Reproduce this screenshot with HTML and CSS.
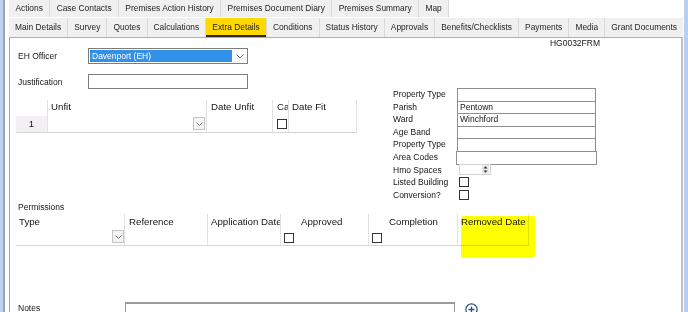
FILE: index.html
```html
<!DOCTYPE html>
<html lang="en">
<head>
    <meta charset="UTF-8">
    <title>Premises - Extra Details</title>
    <link rel="stylesheet" href="styles.css">
</head>
<body>
<div class="frame">
  <div class="edge-l"></div>
  <div class="win">
    <div class="tabs tabs-top">
      <div class="tab">Actions</div>
      <div class="tab">Case Contacts</div>
      <div class="tab">Premises Action History</div>
      <div class="tab">Premises Document Diary</div>
      <div class="tab">Premises Summary</div>
      <div class="tab">Map</div>
    </div>
    <div class="tabs tabs-main">
      <div class="tab">Main Details</div>
      <div class="tab">Survey</div>
      <div class="tab">Quotes</div>
      <div class="tab">Calculations</div>
      <div class="tab active">Extra Details</div>
      <div class="tab">Conditions</div>
      <div class="tab">Status History</div>
      <div class="tab">Approvals</div>
      <div class="tab">Benefits/Checklists</div>
      <div class="tab">Payments</div>
      <div class="tab">Media</div>
      <div class="tab last">Grant Documents</div>
    </div>

    <div class="panel">
      <div class="formcode">HG0032FRM</div>

      <div class="field eh">
        <div class="field-label">EH Officer</div>
        <div class="combo">
          <div class="combo-sel">Davenport (EH)</div>
          <svg class="chev" width="8" height="5" viewBox="0 0 8 5"><path d="M0.5 0.5 L4 4 L7.5 0.5" fill="none" stroke="#666" stroke-width="1"/></svg>
        </div>
      </div>

      <div class="field just">
        <div class="field-label">Justification</div>
        <div class="textbox"></div>
      </div>

      <div class="mid">
        <div class="grid grid-unfit">
          <div class="grow ghead">
            <div class="gcell c-rh"></div>
            <div class="gcell c-unfit">Unfit</div>
            <div class="gcell c-dunfit">Date Unfit</div>
            <div class="gcell c-ca">Ca</div>
            <div class="gcell c-dfit">Date Fit</div>
          </div>
          <div class="grow gbody">
            <div class="gcell c-rh rowhead">1</div>
            <div class="gcell c-unfit has-btn"><div class="ddbtn"><svg width="7" height="4" viewBox="0 0 7 4"><path d="M0.5 0.5 L3.5 3.5 L6.5 0.5" fill="none" stroke="#777" stroke-width="1"/></svg></div></div>
            <div class="gcell c-dunfit"></div>
            <div class="gcell c-ca chk-cell"><div class="chk"></div></div>
            <div class="gcell c-dfit"></div>
          </div>
        </div>

        <div class="props">
          <div class="plabel">Property Type</div><div class="pbox"></div>
          <div class="plabel">Parish</div><div class="pbox">Pentown</div>
          <div class="plabel">Ward</div><div class="pbox">Winchford</div>
          <div class="plabel">Age Band</div><div class="pbox"></div>
          <div class="plabel">Property Type</div><div class="pbox"></div>
          <div class="plabel">Area Codes</div><div class="pbox wide"></div>
          <div class="plabel">Hmo Spaces</div>
          <div class="pcell"><div class="spin"><svg class="spin-arrows" width="7" height="9" viewBox="0 0 7 9"><rect x="0" y="0" width="7" height="9" fill="#e8e8e8"/><path d="M1.5 3.5 L3.5 1.2 L5.5 3.5 Z M1.5 5.5 L3.5 7.8 L5.5 5.5 Z" fill="#333"/></svg></div></div>
          <div class="plabel">Listed Building</div><div class="pcell"><div class="chk"></div></div>
          <div class="plabel">Conversion?</div><div class="pcell"><div class="chk"></div></div>
        </div>
      </div>

      <div class="perm-label">Permissions</div>
      <div class="grid grid-perm">
        <div class="grow ghead">
          <div class="gcell p-type">Type</div>
          <div class="gcell p-ref">Reference</div>
          <div class="gcell p-appdate">Application Date</div>
          <div class="gcell p-chk"></div>
          <div class="gcell p-appr">Approved</div>
          <div class="gcell p-chk"></div>
          <div class="gcell p-comp">Completion</div>
          <div class="gcell p-rem">Removed Date</div>
        </div>
        <div class="grow gbody">
          <div class="gcell p-type has-btn flush"><div class="ddbtn"><svg width="7" height="4" viewBox="0 0 7 4"><path d="M0.5 0.5 L3.5 3.5 L6.5 0.5" fill="none" stroke="#777" stroke-width="1"/></svg></div></div>
          <div class="gcell p-ref"></div>
          <div class="gcell p-appdate"></div>
          <div class="gcell p-chk chk-cell"><div class="chk"></div></div>
          <div class="gcell p-appr"></div>
          <div class="gcell p-chk chk-cell"><div class="chk"></div></div>
          <div class="gcell p-comp"></div>
          <div class="gcell p-rem"></div>
        </div>
        <div class="marker"></div>
      </div>

      <div class="notes">
        <div class="notes-label">Notes</div>
        <div class="notes-box"></div>
        <svg class="add-icon" width="13" height="13" viewBox="0 0 13 13"><circle cx="6.5" cy="6.5" r="5.6" fill="#fff" stroke="#2f4f7f" stroke-width="1.2"/><path d="M6.5 3.5 V9.5 M3.5 6.5 H9.5" stroke="#2f4f7f" stroke-width="1.3"/></svg>
      </div>
    </div>
  </div>
  <div class="edge-r"></div>
</div>
</body>
</html>
```

FILE: styles.css
```css
body {
  margin: 0;
  font-family: "Liberation Sans", Arial, sans-serif;
  font-size: 8.5px;
  color: #151515;
  background: #fff;
}

.frame {
  display: flex;
  height: 312px;
  overflow: hidden;
}

.edge-l {
  width: 3px;
  background: #bdd3f0;
  border-right: 2px solid #a2a2a2;
}

.edge-r {
  width: 4px;
  background: #b8cfef;
  border-left: 1px solid #fff;
}

.win {
  flex: 1;
  min-width: 0;
  padding-left: 4px;
  display: flex;
  flex-direction: column;
}

/* tab strip */
.tabs {
  display: flex;
}

.tab {
  background: #f0f0f0;
  border-right: 1px solid #dadada;
  white-space: nowrap;
  font-size: 8.4px;
  color: #1e1e1e;
}

.tabs-top {
  height: 17px;
}

.tabs-top .tab {
  padding: 0 6.4px;
  line-height: 17px;
}

.tabs-main {
  margin-top: 1px;
  height: 19px;
}

.tabs-main .tab {
  flex: 1 1 auto;
  padding: 0 6px;
  line-height: 19px;
  text-align: center;
}

.tab.last {
  border-right: none;
}

.tab.active {
  background: #ffd800;
  box-shadow: inset 0 -2px #2a2a2a;
}

/* panel */
.panel {
  flex: 1;
  border-top: 1px solid #adadad;
  border-left: 1px solid #a3a3a3;
  border-right: 2px solid #c2c2c2;
  padding-left: 8px;
}

.formcode {
  height: 10px;
  line-height: 10px;
  text-align: right;
  padding-right: 81px;
}

.field {
  display: flex;
  align-items: center;
}

.field-label {
  width: 70px;
}

.eh {
  height: 16px;
}

.combo {
  width: 160px;
  height: 16px;
  box-sizing: border-box;
  border: 1px solid #7d7d7d;
  padding: 1px;
  display: flex;
  align-items: center;
}

.combo-sel {
  width: 142px;
  height: 12px;
  line-height: 12px;
  background: #3390e8;
  color: #fff;
  padding-left: 2px;
  box-sizing: border-box;
}

.chev {
  margin-left: 4px;
}

.just {
  margin-top: 10px;
  height: 15px;
}

.textbox {
  width: 160px;
  height: 15px;
  box-sizing: border-box;
  border: 1px solid #7d7d7d;
}

.mid {
  display: flex;
  margin-top: -1px;
  height: 114px;
}

/* grids */
.grid {
  margin-left: -2px;
  font-size: 9.7px;
  width: max-content;
}

.grid-unfit {
  margin-top: 12px;
  align-self: flex-start;
}

.grow {
  display: flex;
}

.gbody {
  height: 16px;
  border-bottom: 1px solid #d6d6d6;
}

.gcell {
  box-sizing: border-box;
  border-right: 1px solid #e2e2e2;
  overflow: hidden;
  white-space: nowrap;
  padding-left: 3px;
  line-height: 12px;
}

.grid-unfit .ghead {
  height: 16px;
}

.grid-unfit .ghead .gcell {
  padding-top: 1px;
}

.grid-perm .ghead {
  height: 15px;
}

.grid-perm .ghead .gcell {
  padding-top: 2px;
}

.c-rh { width: 32px; padding-left: 0; }
.c-unfit { width: 159px; }
.c-dunfit { width: 66px; padding-left: 4px; }
.c-ca { width: 16px; padding-left: 4px; }
.c-dfit { width: 68px; }

.rowhead {
  background: #f2f0f2;
  text-align: center;
  line-height: 16px;
}

.has-btn {
  display: flex;
  justify-content: flex-end;
  align-items: flex-start;
  padding: 1px 1px 0 0;
}

.has-btn.flush {
  padding-right: 0;
}

.ddbtn {
  width: 12px;
  height: 13px;
  box-sizing: border-box;
  border: 1px solid #c4c4c4;
  background: #f4f4f4;
  display: flex;
  align-items: center;
  justify-content: center;
}

.chk {
  width: 10px;
  height: 10px;
  box-sizing: border-box;
  border: 1px solid #333;
  background: #fff;
}

.chk-cell {
  padding-top: 3px;
}

.grid-unfit .chk-cell {
  padding-left: 4px;
}

.p-type { width: 109px; }
.p-ref { width: 83px; padding-left: 4px; }
.p-appdate { width: 73px; }
.p-chk { width: 16px; border-right: none; }
.p-appr { width: 72px; padding-left: 4px; }
.p-comp { width: 73px; padding-left: 4px; }
.p-rem { width: 71px; }

.grid-perm .chk-cell {
  padding-top: 4px;
  padding-left: 3px;
}

.grid-perm {
  position: relative;
  margin-top: 2px;
}

.marker {
  position: absolute;
  left: 445px;
  top: 2px;
  width: 74px;
  height: 42px;
  background: #ffff00;
  mix-blend-mode: multiply;
  border-radius: 3px 2px 4px 2px;
}

/* property fields */
.props {
  margin-left: 36px;
  display: grid;
  grid-template-columns: 64px 140px;
  grid-auto-rows: 12.6px;
}

.plabel {
  line-height: 12.6px;
  white-space: nowrap;
}

.pbox {
  height: 13.6px;
  width: 139px;
  box-sizing: border-box;
  border: 1px solid #8e8e8e;
  padding-left: 2px;
  line-height: 11.6px;
  background: #fff;
}

.pbox.wide {
  width: 141px;
  margin-left: -1px;
}

.pcell {
  display: flex;
  align-items: center;
  padding-left: 2px;
}

.spin {
  width: 32px;
  height: 11px;
  box-sizing: border-box;
  border: 1px solid #d2d2d2;
  display: flex;
  justify-content: flex-end;
  align-items: center;
  padding-right: 1px;
}

.perm-label {
  line-height: 10px;
}

/* notes */
.notes {
  display: flex;
  align-items: flex-start;
  margin-top: 56px;
}

.notes-label {
  width: 107px;
  line-height: 10px;
  margin-top: 1px;
}

.notes-box {
  width: 330px;
  height: 40px;
  box-sizing: border-box;
  border: 1px solid #9a9a9a;
  border-top-width: 2px;
}

.add-icon {
  margin: 1px 0 0 10px;
}
```
